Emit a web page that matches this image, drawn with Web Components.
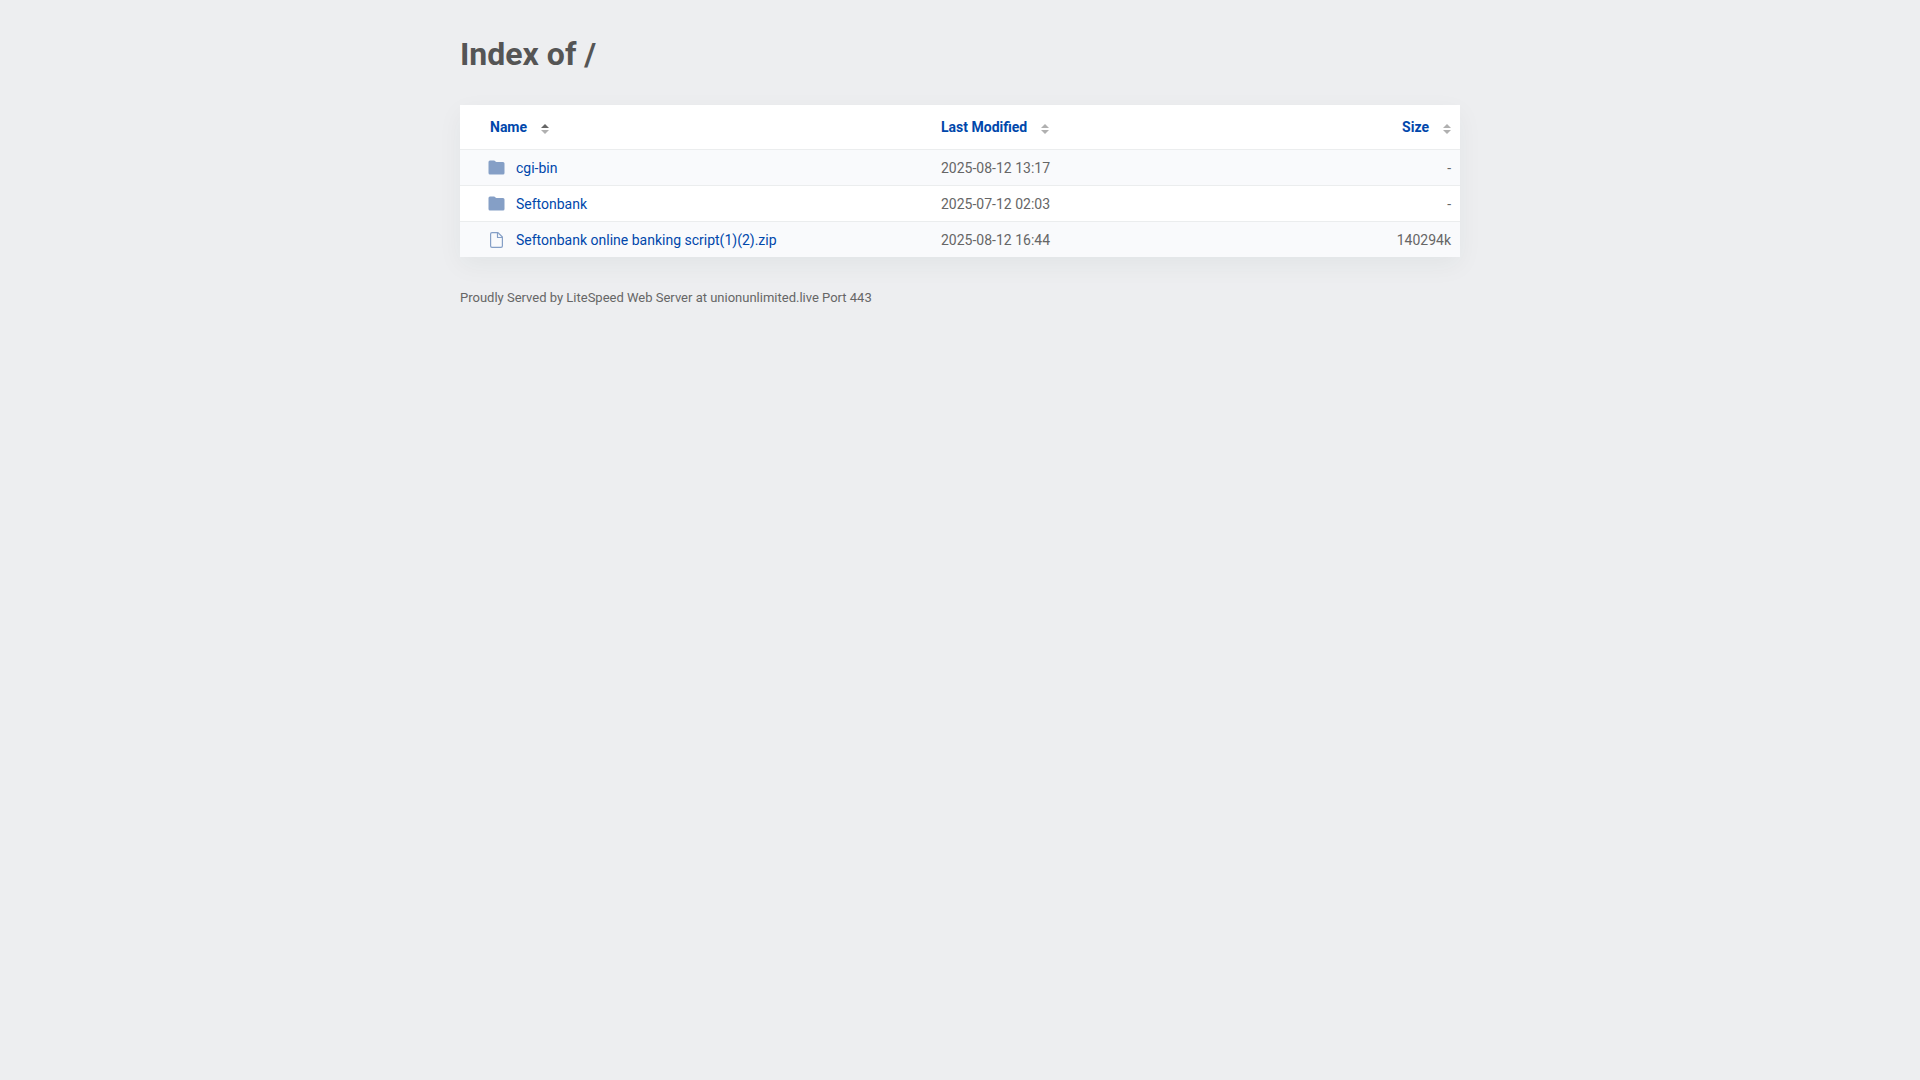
<!DOCTYPE html>
<html lang="en">
<head>
<meta charset="utf-8">
<title>Index of /</title>
<style>
body { margin: 0; background: #edeef0; color: #545454; font: 14px/20px Roboto, "Liberation Sans", sans-serif; }
</style>
</head>
<body>
<listing-page>
  <span slot="title">Index of /</span>
  <file-table></file-table>
  <span slot="footer">Proudly Served by LiteSpeed Web Server at unionunlimited.live Port 443</span>
</listing-page>

<template id="page-template">
  <style>
    :host { display: block; max-width: 1000px; margin: 0 auto; padding: 32px 0; }
    h1 { margin: 0 0 29px; font-size: 32px; line-height: 44px; font-weight: 700; color: #555; }
    footer { margin-top: 31px; font-size: 13px; color: #666; }
  </style>
  <h1><slot name="title"></slot></h1>
  <main><slot></slot></main>
  <footer><slot name="footer"></slot></footer>
</template>

<template id="table-template">
  <style>
    :host { display: block; background: #fff; box-shadow: 0 8px 24px rgba(0, 60, 60, 0.05); }
    table { width: 100%; border-collapse: separate; border-spacing: 0; table-layout: fixed; }
    th, td { padding: 0 9px; text-align: left; vertical-align: middle; }
    th { height: 44px; font-weight: 700; }
    td { height: 35px; border-top: 1px solid #ebedee; color: #666; }
    tbody tr:nth-child(odd) { background: #f9fafc; }
    th:first-child { padding-left: 30px; }
    td:first-child { padding-left: 28px; }
    .name { width: 472px; box-sizing: border-box; }
    .size { text-align: right; }
    button { display: inline-flex; align-items: center; gap: 14px; padding: 0; border: 0; background: none; font: inherit; color: #0047ab; cursor: pointer; }
    a { display: flex; align-items: center; gap: 11px; color: #0047ab; text-decoration: none; }
    a:hover { text-decoration: underline; }
  </style>
  <table>
    <thead>
      <tr>
        <th class="name" aria-sort="ascending"><button>Name<sort-arrows active></sort-arrows></button></th>
        <th><button>Last Modified<sort-arrows></sort-arrows></button></th>
        <th class="size"><button>Size<sort-arrows></sort-arrows></button></th>
      </tr>
    </thead>
    <tbody>
      <tr><td><a href="#cgi-bin"><file-icon kind="folder"></file-icon>cgi-bin</a></td><td>2025-08-12 13:17</td><td class="size">-</td></tr>
      <tr><td><a href="#seftonbank"><file-icon kind="folder"></file-icon>Seftonbank</a></td><td>2025-07-12 02:03</td><td class="size">-</td></tr>
      <tr><td><a href="#zip"><file-icon kind="file"></file-icon>Seftonbank online banking script(1)(2).zip</a></td><td>2025-08-12 16:44</td><td class="size">140294k</td></tr>
    </tbody>
  </table>
</template>

<template id="arrows-template">
  <style>
    :host { display: block; height: 10px; padding-top: 4px; color: #b0b0b0; }
    :host([active]) { --up: #666; }
    svg { display: block; }
  </style>
  <svg width="8" height="10" viewBox="0 0 8 10" aria-hidden="true">
    <path d="M0 4 4 0 8 4Z" style="fill:var(--up, #b0b0b0)"/>
    <path d="M0 6H8L4 10Z" fill="currentColor"/>
  </svg>
</template>

<template id="icon-template">
  <style>
    :host { display: block; }
    svg { display: none; }
    :host([kind="folder"]) .folder, :host([kind="file"]) .file { display: block; }
  </style>
  <svg class="folder" width="17" height="16" viewBox="0 0 17 16" aria-hidden="true">
    <path fill="#859fc6" d="M2 .5h4c1 0 1.500 1.500 2.500 1.500H15a1.500 1.500 0 0 1 1.500 1.500v9.500A1.500 1.500 0 0 1 15 14.500H2a1.500 1.500 0 0 1-1.500-1.500V2A1.500 1.500 0 0 1 2 .5Z"/>
  </svg>
  <svg class="file" width="17" height="16" viewBox="0 0 17 16" aria-hidden="true" fill="none" stroke="#859fc6" stroke-width="1.200" stroke-linejoin="round">
    <path d="M4 .6h6L14.400 5v9a1.400 1.400 0 0 1-1.400 1.400H4A1.400 1.400 0 0 1 2.600 14V2A1.400 1.400 0 0 1 4 .6Z"/>
    <path d="M9.500 1v4.500H14"/>
  </svg>
</template>

<script>
function defineFromTemplate(tag, templateId) {
  customElements.define(tag, class extends HTMLElement {
    constructor() {
      super();
      this.attachShadow({ mode: "open" }).append(document.getElementById(templateId).content.cloneNode(true));
    }
  });
}
defineFromTemplate("sort-arrows", "arrows-template");
defineFromTemplate("file-icon", "icon-template");
defineFromTemplate("file-table", "table-template");
defineFromTemplate("listing-page", "page-template");
</script>
</body>
</html>
